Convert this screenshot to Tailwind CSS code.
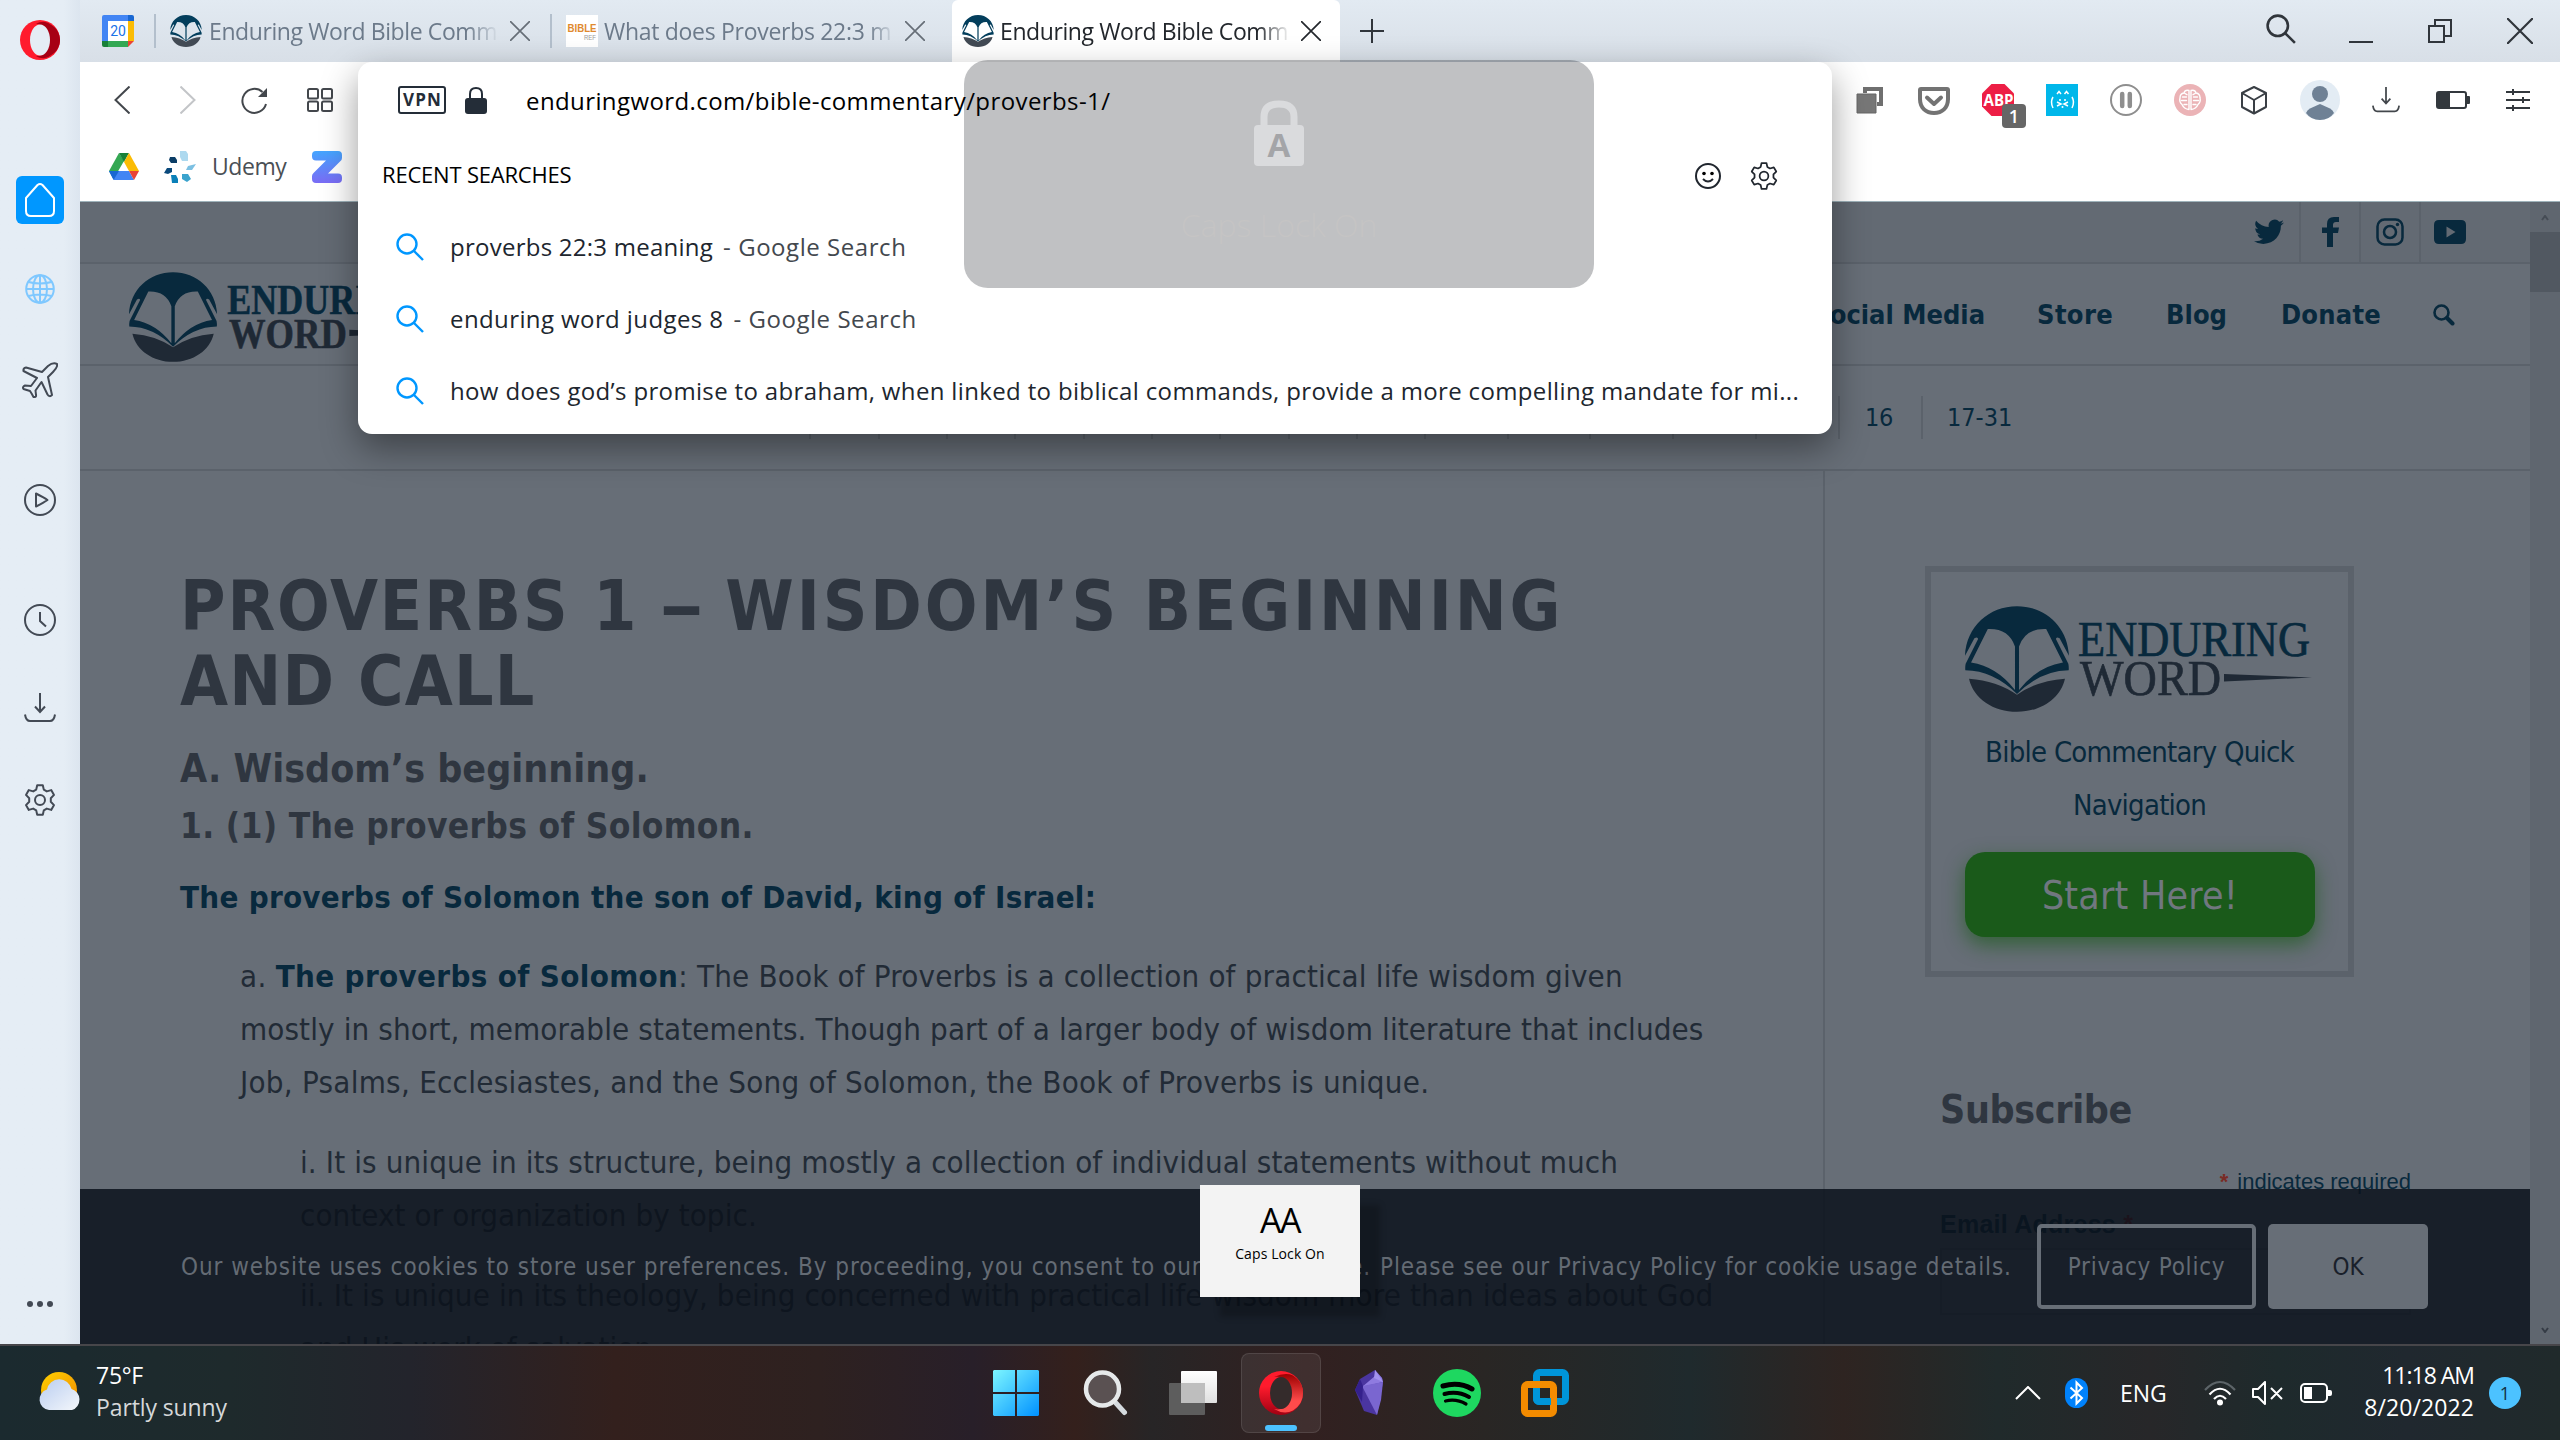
<!DOCTYPE html>
<html lang="en">
<head>
<meta charset="utf-8">
<title>Enduring Word Bible Commentary</title>
<script src="https://cdn.jsdelivr.net/npm/@tailwindcss/browser@4"></script>
</head>
<body class="relative h-[1440px] w-[2560px] overflow-hidden whitespace-nowrap font-['Open_Sans',sans-serif] text-[24px] text-[#20262e]">

<svg class="hidden">
  <symbol id="mark" viewBox="0 0 310 315">
    <path fill="var(--top)" fill-rule="evenodd" d="M0 148C4 60 72 0 155 0S306 60 310 148L282 96Q272 90 271 98L308 172Q310 182 309 191Q225 192 155 262Q85 192 1 191Q0 182 2 172L39 98Q38 90 28 96ZM68 68L18 168Q95 180 149 250L149 120Q130 65 68 68ZM242 68L292 168Q215 180 161 250L161 120Q180 65 242 68Z"/>
    <path fill="var(--bot)" d="M12 216Q95 222 155 264Q215 222 298 216C285 275 225 315 155 315S25 275 12 216Z"/>
  </symbol>
  <symbol id="gear" viewBox="0 0 32 32">
    <path fill="none" stroke="currentColor" stroke-width="2" stroke-linejoin="round" d="M13.2 1.2h5.6l1 4.4 3 1.8 4.4-1.3 2.8 4.8-3.2 3.3v3.6l3.2 3.3-2.8 4.8-4.4-1.3-3 1.8-1 4.4h-5.6l-1-4.4-3-1.8-4.4 1.3L2 21.100l3.200-3.300v-3.600L2 10.900l2.800-4.800 4.400 1.300 3-1.800z"/>
    <circle cx="16" cy="16" r="5" fill="none" stroke="currentColor" stroke-width="2"/>
  </symbol>
  <symbol id="x" viewBox="0 0 24 24"><path fill="none" stroke="currentColor" stroke-width="2" d="M0 0L24 24M24 0L0 24"/></symbol>
  <symbol id="glass" viewBox="0 0 28 28"><g fill="none" stroke="currentColor" stroke-width="2.400"><circle cx="11" cy="11" r="9.500"/><path d="M17.500 17.500L27 27"/></g></symbol>
  <symbol id="down" viewBox="0 0 32 32"><path fill="none" stroke="currentColor" stroke-width="2" d="M16 1v19M11 14.500l5 5.500 5-5.500M1 22.500q1 6.500 5 6.500h20q4 0 5-6.500"/></symbol>
</svg>

<div class="flex h-[1344px]">
  <!-- Opera sidebar -->
  <aside class="flex w-[80px] shrink-0 flex-col items-center bg-linear-to-r from-[#e5edf5] from-80% to-[#dce5ef] pt-5 text-[#434a55]">
    <svg class="size-[40px]" viewBox="0 0 40 40"><circle cx="20" cy="20" r="20" fill="#ff1b2d"/><path fill="#a70014" d="M16 4c5-1 10 4 11 16s-5 17-11 16c5 3 10 3 14.500-.5C37 32 40 26 40 20S37 8 30.500 4.500C26 1 21 1 16 4z"/><ellipse cx="20" cy="20" rx="10" ry="15.500" fill="#e5edf5"/></svg>
    <div class="mt-[116px] flex size-[48px] items-center justify-center rounded-[6px] bg-[#0097ff]"><svg class="size-[36px]" viewBox="0 0 36 36"><path fill="none" stroke="#fff" stroke-width="2" stroke-linejoin="round" d="M4 16L15.500 3q2.500-2 5 0L32 16v13q0 5-5 5H9q-5 0-5-5z"/></svg></div>
    <svg class="mt-[50px] size-[30px]" viewBox="0 0 30 30"><g fill="none" stroke="#7fc8ff" stroke-width="2"><circle cx="15" cy="15" r="13.800"/><ellipse cx="15" cy="15" rx="7" ry="13.800"/><path d="M15 1v28M1 15h28M3.500 8q11.500 3 23 0M3.500 22q11.500-3 23 0"/></g></svg>
    <svg class="mt-[58px] size-[36px]" viewBox="0 0 36 36"><path fill="none" stroke="currentColor" stroke-width="2" stroke-linejoin="round" d="M35 2Q31 0 26 4L20 10 4 5.500Q1 6 1.500 9L15 16l-6 8-6-.500Q0 25 1.500 27l6.500 2q2 3 3.500 6 3 .500 2.500-2l-.500-4.500 6-8.500 6 12.500q2 3 4.500.500L26 15l5-5Q36 5 35 2z"/></svg>
    <svg class="mt-[86px] size-[32px]" viewBox="0 0 32 32"><g fill="none" stroke="currentColor" stroke-width="2" stroke-linejoin="round"><circle cx="16" cy="16" r="15"/><path d="M12 9.500v13q8-4 11.500-6.500Q20 13.500 12 9.500z"/></g></svg>
    <svg class="mt-[88px] size-[32px]" viewBox="0 0 32 32"><g fill="none" stroke="currentColor" stroke-width="2"><circle cx="16" cy="16" r="15"/><path d="M16 8v9l6 5.500"/></g></svg>
    <svg class="mt-[56px] size-[32px]"><use href="#down"/></svg>
    <svg class="mt-[60px] size-[32px]"><use href="#gear"/></svg>
    <svg class="mt-[485px] h-[6px] w-[28px]" viewBox="0 0 28 6"><g fill="currentColor"><circle cx="4" cy="3" r="3"/><circle cx="14" cy="3" r="3"/><circle cx="24" cy="3" r="3"/></g></svg>
  </aside>

  <main class="flex w-[2480px] flex-col">
    <!-- Tab strip -->
    <div class="flex h-[62px] items-center bg-linear-to-b from-[#e2eaf2] to-[#d8dfe7] pl-[22px] text-[23px] leading-[34px] text-[#6c7a8a]">
      <svg class="size-8" viewBox="0 0 32 32"><path fill="#4285f4" d="M2 0h24v6H6v20H0V2q0-2 2-2z"/><path fill="#1967d2" d="M26 0h4q2 0 2 2v4h-6z"/><path fill="#fbbc04" d="M26 6h6v20h-6z"/><path fill="#188038" d="M0 26h6v6H2q-2 0-2-2z"/><path fill="#34a853" d="M6 26h20v6H6z"/><path fill="#ea4335" d="M26 26h6l-6 6z"/><path fill="#fff" d="M6 6h20v20H6z"/><text x="16" y="21" font-size="14" text-anchor="middle" fill="#1a73e8" font-family="Roboto">20</text></svg>
      <div class="ml-5 h-[34px] w-[2px] bg-[#b3bfcc]"></div>
      <svg class="ml-[14px] size-8 [--bot:#424a54] [--top:#033e5c]"><use href="#mark"/></svg>
      <div class="ml-[7px] w-[293px] overflow-hidden tracking-[-0.4px] [mask-image:linear-gradient(to_right,black_88%,transparent_99%)]">Enduring Word Bible Comm</div>
      <svg class="ml-[8px] size-5 text-[#666e77]"><use href="#x"/></svg>
      <div class="ml-5 h-[34px] w-[2px] bg-[#b3bfcc]"></div>
      <svg class="ml-[14px] size-8" viewBox="0 0 32 32"><path fill="#fff" d="M0 0h32v32H0z"/><text x="1.500" y="16.500" font-size="11" font-weight="700" fill="#e08a2e" font-family="Liberation Sans" textLength="29" lengthAdjust="spacingAndGlyphs">BIBLE</text><text x="18" y="25" font-size="7.500" fill="#9a9a9a" font-family="Liberation Sans" textLength="12" lengthAdjust="spacingAndGlyphs">REF</text></svg>
      <div class="ml-[6px] w-[294px] overflow-hidden tracking-[-0.3px] [mask-image:linear-gradient(to_right,black_90%,transparent_99%)]">What does Proverbs 22:3 m</div>
      <svg class="ml-[7px] size-5 text-[#666e77]"><use href="#x"/></svg>
      <div class="ml-[27px] flex h-full w-[388px] items-center rounded-t-[6px] bg-white pl-[10px] text-[#23272c]">
        <svg class="size-8 [--bot:#424a54] [--top:#033e5c]"><use href="#mark"/></svg>
        <div class="ml-[6px] w-[293px] overflow-hidden tracking-[-0.4px] [mask-image:linear-gradient(to_right,black_88%,transparent_99%)]">Enduring Word Bible Comm</div>
        <svg class="ml-[8px] size-5"><use href="#x"/></svg>
      </div>
      <svg class="ml-5 size-6 text-[#30353b]" viewBox="0 0 24 24"><path stroke="currentColor" stroke-width="2" d="M12 0v24M0 12h24"/></svg>
      <div class="ml-auto flex items-center text-[#30353b]">
        <svg class="-mt-1 size-[30px]"><use href="#glass"/></svg>
        <svg class="ml-[53px] size-6" viewBox="0 0 24 24"><path stroke="currentColor" stroke-width="2" d="M0 23h24"/></svg>
        <svg class="ml-[55px] size-6" viewBox="0 0 24 24"><path fill="none" stroke="currentColor" stroke-width="2" d="M1 7h15v16H1zM7 7V1h16v16h-7"/></svg>
        <svg class="ml-[55px] mr-[27px] size-[26px]"><use href="#x"/></svg>
      </div>
    </div>

    <!-- Toolbar and bookmarks -->
    <div class="h-[140px] border-b border-[#9fb3bb] bg-white">
      <div class="flex h-[76px] items-center text-[#43474c]">
        <svg class="ml-[34px] h-7 w-4" viewBox="0 0 16 28"><path fill="none" stroke="currentColor" stroke-width="2" d="M15.500.500L1.500 14l14 13.500"/></svg>
        <svg class="ml-[50px] h-7 w-4 text-[#c3c5c8]" viewBox="0 0 16 28"><path fill="none" stroke="currentColor" stroke-width="2" d="M.500.500L14.500 14l-14 13.500"/></svg>
        <svg class="ml-[44px] size-7" viewBox="0 0 28 28"><path fill="none" stroke="currentColor" stroke-width="2" d="M22.500 6A12 12 0 1 0 26 18"/><path fill="currentColor" d="M27 2v9h-9z"/></svg>
        <svg class="ml-[39px] size-[26px]" viewBox="0 0 26 26"><g fill="none" stroke="currentColor" stroke-width="2"><rect x="1" y="2" width="10" height="9.500" rx="1.500"/><rect x="15" y="2" width="10" height="9.500" rx="1.500"/><rect x="1" y="14.500" width="10" height="9.500" rx="1.500"/><rect x="15" y="14.500" width="10" height="9.500" rx="1.500"/></g></svg>
        <div class="ml-auto flex items-center pr-[25px]">
          <svg class="size-8" viewBox="0 0 32 32"><path fill="none" stroke="#6f6f6f" stroke-width="4" d="M11 9V5h16v15h-4"/><path fill="#777" stroke="#666" d="M3 10h19v19H3z"/></svg>
          <svg class="ml-8 size-8" viewBox="0 0 32 32"><path fill="#737373" d="M3 3h26q3 0 3 3v9c0 10-7 16-16 16S0 25 0 15V6q0-3 3-3z"/><path fill="#fff" d="M4 7h24v8c0 8-5 12-12 12S4 23 4 15z"/><path fill="none" stroke="#737373" stroke-width="4" stroke-linecap="round" stroke-linejoin="round" d="M9 13.500l7 6.500 7-6.500"/></svg>
          <div class="relative ml-8 size-8">
            <svg class="size-8" viewBox="0 0 32 32"><path fill="#ed1e45" d="M9.500 0h13L32 9.500v13L22.500 32h-13L0 22.500v-13z"/><text x="1.500" y="21.500" font-size="15.500" font-weight="700" fill="#fff" font-family="Open Sans" textLength="30" lengthAdjust="spacingAndGlyphs">ABP</text></svg>
            <div class="absolute left-[20px] top-[20px] flex size-6 items-center justify-center rounded-[4px] bg-[#666] text-[18px] font-semibold text-white">1</div>
          </div>
          <svg class="ml-8 size-8" viewBox="0 0 32 32"><path fill="#00b7ea" d="M0 0h32v32H0z"/><g fill="none" stroke="#fff" stroke-width="1.500"><path d="M11 10l2-2.500 2 2.500M18.500 10l2-2.500 2 2.500M7 13q-3 5 0 11M26 13q3 5 0 11M11 18l4 2-4 2M22 18l-4 2 4 2"/></g><g fill="#fff"><circle cx="14" cy="16" r="1"/><circle cx="19" cy="16" r="1"/><circle cx="16.500" cy="23" r="1"/></g></svg>
          <svg class="ml-8 size-8" viewBox="0 0 32 32"><circle cx="16" cy="16" r="15" fill="none" stroke="#8e8e8e" stroke-width="2"/><path stroke="#8e8e8e" stroke-width="4.500" stroke-linecap="round" d="M12.200 10v12M19.800 10v12"/></svg>
          <svg class="ml-8 size-8" viewBox="0 0 32 32"><circle cx="16" cy="16" r="16" fill="#ebb3b6"/><g fill="none" stroke="#fff" stroke-width="1.400" stroke-linecap="round"><path d="M15 7v18M17 7v18M15 6.500q-4-1-5 2.500-4 .5-4 5-1 4 2 6.500 2 4.500 7 5M17 6.500q4-1 5 2.500 4 .5 4 5 1 4-2 6.500-2 4.500-7 5M8.500 13h4M7.500 16.500h5M10 20.500h3M19.500 13h4M19.500 16.500h5M19 20.500h3M11 9.500l2 1.200M21 9.500l-2 1.200"/></g></svg>
          <svg class="ml-8 size-8" viewBox="0 0 32 32"><path fill="none" stroke="#3a3f45" stroke-width="2" stroke-linejoin="round" d="M16 3L28 9v14l-12 6.500L4 23V9zM4 9l12 7 12-7M16 16v13"/></svg>
          <svg class="ml-[30px] size-10" viewBox="0 0 40 40"><circle cx="20" cy="20" r="20" fill="#e3ecf4"/><circle cx="20" cy="14" r="8" fill="#6f8195"/><path fill="#6f8195" d="M6 33q1-3 4-4.500L20 24l10 4.500q3 1.500 4 4.500-5 7-14 7T6 33z"/></svg>
          <svg class="ml-[32px] size-[28px]"><use href="#down"/></svg>
          <svg class="ml-[36px] h-[18px] w-[34px]" viewBox="0 0 34 18"><rect x="1" y="1" width="29" height="16" rx="2" fill="none" stroke="#33383d" stroke-width="2"/><path fill="#33383d" d="M2 2h12v14H2zM31 5h2q1 0 1 1v6q0 1-1 1h-2z"/></svg>
          <svg class="ml-[36px] mr-[5px] size-[24px]" viewBox="0 0 24 24"><path stroke="#33383d" stroke-width="2" d="M0 4h24M0 12h24M0 20h24M7 1v6M17 9v6M7 17v6"/></svg>
        </div>
      </div>
      <div class="flex h-[55px] items-center text-[23px] text-[#4a4f55]">
        <svg class="ml-[29px] mt-[2px] h-[27px] w-[30px]" viewBox="0 0 30 27"><path fill="#34a853" d="M10 0L0 18l4.500 8L15 8z"/><path fill="#188038" d="M10 0h10l-5 9z"/><path fill="#fbbc04" d="M20 0l10 18H20L15 9z"/><path fill="#4285f4" d="M0 18h20l5 9H5z"/><path fill="#1967d2" d="M0 18h10l-5.500 9z"/><path fill="#ea4335" d="M20 18h10l-5 9z"/></svg>
        <svg class="ml-[25px] mt-[2px] size-8" viewBox="0 0 32 32"><path fill="#add9ef" d="M16 0h6l2 3v7h-6l-2-4z"/><path fill="#7cc0e2" d="M32 13l-8 2-2 4h6z"/><path fill="#0b3d66" d="M6 6h5l2 3v3H7L5 9z"/><path fill="#0b4a7c" d="M3 17h5v4l-4 2-4-1z"/><path fill="#0a80b8" d="M7 24h5l2 4v4H8z"/><path fill="#3ba3cd" d="M18 23h6l3 5-4 3-5-3z"/></svg>
        <span class="ml-[16px] mt-px tracking-[-0.45px]">Udemy</span>
        <svg class="ml-[26px] mt-[2px] h-8 w-[30px]" viewBox="0 0 30 32"><defs><linearGradient id="zg" x2="0" y2="1"><stop stop-color="#45a5ff"/><stop offset="1" stop-color="#7a6cf5"/></linearGradient></defs><path fill="url(#zg)" d="M4 0h22q4 0 4 4v3q0 2-2 3.500L16 22.500h10q4 0 4 4v1.500q0 4-4 4H4q-4 0-4-4v-3q0-2 2-3.500L14 9.500H4q-4 0-4-4V4q0-4 4-4z"/></svg>
      </div>
    </div>

    <!-- Page viewport -->
    <div class="relative flex h-[1142px] overflow-hidden bg-[#676e77] font-['DejaVu_Sans_Condensed','DejaVu_Sans',sans-serif] text-[#08293d]">
      <div class="w-[2450px]">
        <div class="flex h-[62px] justify-end border-b-2 border-[#5b626b] bg-[#636a73] pr-[51px]">
          <div class="flex w-[62px] items-center justify-center"><svg class="ml-[2px] h-[26px] w-[30px]" viewBox="0 0 24 20"><path fill="currentColor" d="M24 2.400a10 10 0 0 1-2.800.8A5 5 0 0 0 23.300.500a10 10 0 0 1-3.100 1.200A4.900 4.900 0 0 0 11.800 6 14 14 0 0 1 1.700.900a4.900 4.900 0 0 0 1.500 6.600A5 5 0 0 1 1 6.900a4.900 4.900 0 0 0 3.900 4.900 5 5 0 0 1-2.200.1 4.900 4.900 0 0 0 4.600 3.400A9.900 9.900 0 0 1 0 17.300 14 14 0 0 0 7.500 19.500c9.200 0 14.300-7.700 14-14.600A10 10 0 0 0 24 2.400z"/></svg></div>
          <div class="flex w-[60px] items-center justify-center border-l-2 border-[#5b626b]"><svg class="h-[30px] w-[17px]" viewBox="0 0 17 30"><path fill="currentColor" d="M5 30V16H0v-5.500h5V7q0-7 7-7h5v5h-3q-3 0-3 3v2.500h6L16 16h-5v14z"/></svg></div>
          <div class="flex w-[60px] items-center justify-center border-l-2 border-[#5b626b]"><svg class="size-[28px]" viewBox="0 0 28 28"><g fill="none" stroke="currentColor" stroke-width="2.500"><rect x="1.500" y="1.500" width="25" height="25" rx="7"/><circle cx="14" cy="14" r="6"/></g><circle cx="21.500" cy="6.500" r="1.700" fill="currentColor"/></svg></div>
          <div class="flex w-[60px] items-center justify-center border-l-2 border-[#5b626b]"><svg class="h-[24px] w-[32px]" viewBox="0 0 32 24"><path fill="currentColor" fill-rule="evenodd" d="M5 0h22q5 0 5 5v14q0 5-5 5H5q-5 0-5-5V5q0-5 5-5zM12.500 6.500v11l9-5.500z"/></svg></div>
        </div>
        <div class="flex h-[102px] items-center border-b-2 border-[#5b626b] text-[27px] font-bold leading-[40px]">
          <svg class="ml-[49px] mt-[6px] h-[90px] w-[300px] [--bot:#1f2935] [--top:#08293d]" viewBox="0 0 354 106"><use href="#mark" width="104" height="106"/><g font-family="Liberation Serif" font-size="50" stroke-width=".7"><text x="116" y="50" fill="#08293d" stroke="#08293d" textLength="231" lengthAdjust="spacingAndGlyphs">ENDURING</text><text x="118" y="89" fill="#1f2935" stroke="#1f2935" textLength="139" lengthAdjust="spacingAndGlyphs">WORD</text></g><path fill="#1f2935" d="M260 68l88 3.500-88 4z"/></svg>
          <div class="ml-auto flex items-center pt-[2px]"><span>Social Media</span><span class="ml-[52px] tracking-[0.35px]">Store</span><span class="ml-[53px]">Blog</span><span class="ml-[54px] tracking-[0.23px]">Donate</span>
          <svg class="ml-[52px] mr-[75px] size-[22px]" viewBox="0 0 22 22"><g fill="none" stroke="currentColor"><circle cx="8.500" cy="8.500" r="7" stroke-width="2.600"/><path stroke-width="4" stroke-linecap="round" d="M14 14l5.500 5.500"/></g></svg></div>
        </div>
        <div class="flex h-[105px] items-center justify-end border-b-2 border-[#5b626b] text-[25px]">
          <div class="flex h-[43px]">
            <div class="w-[69px] border-l-2 border-[#5b626b]"></div><div class="w-[68px] border-l-2 border-[#5b626b]"></div><div class="w-[68px] border-l-2 border-[#5b626b]"></div><div class="w-[69px] border-l-2 border-[#5b626b]"></div><div class="w-[68px] border-l-2 border-[#5b626b]"></div><div class="w-[68px] border-l-2 border-[#5b626b]"></div><div class="w-[69px] border-l-2 border-[#5b626b]"></div><div class="w-[68px] border-l-2 border-[#5b626b]"></div><div class="w-[68px] border-l-2 border-[#5b626b]"></div><div class="w-[83px] border-l-2 border-[#5b626b]"></div><div class="w-[82px] border-l-2 border-[#5b626b]"></div><div class="w-[83px] border-l-2 border-[#5b626b]"></div><div class="w-[83px] border-l-2 border-[#5b626b]"></div><div class="w-[83px] border-l-2 border-[#5b626b]"></div>
            <div class="flex w-[83px] items-center border-l-2 border-[#5b626b] pl-[25px] pt-px tracking-[-0.3px]">16</div>
            <div class="flex w-[609px] items-center border-l-2 border-[#5b626b] pl-[24px] pt-px">17-31</div>
          </div>
        </div>

        <div class="flex h-[900px]">
          <article class="w-[1745px] shrink-0 border-r-2 border-[#5b626b] pl-[100px] pt-[98px] text-[31px] leading-[53px] text-[#222b36]">
            <h1 class="text-[69px] font-bold leading-[75px] text-[#2f3640]"><span class="tracking-[1.9px]">PROVERBS 1 </span><span class="mx-[4px] inline-block scale-x-[1.45]">–</span><span class="tracking-[2.9px]"> WISDOM’S BEGINNING</span><br><span class="tracking-[1.2px]">AND CALL</span></h1>
            <h2 class="mt-[20px] text-[39px] font-bold leading-[59px] text-[#2f3640]">A. Wisdom’s beginning.</h2>
            <h3 class="text-[35px] font-bold leading-[56px] tracking-[0.32px] text-[#2f3640]">1. (1) The proverbs of Solomon.</h3>
            <p class="mt-[17px] font-bold leading-[52px] tracking-[0.28px] text-[#08293d]">The proverbs of Solomon the son of David, king of Israel:</p>
            <p class="ml-[60px] mt-[27px]"><span class="tracking-[0.3px]">a. </span><b class="tracking-[0.35px] text-[#08293d]">The proverbs of Solomon</b><span class="tracking-[0.18px]">: The Book of Proverbs is a collection of practical life wisdom given</span><br><span class="tracking-[0.12px]">mostly in short, memorable statements. Though part of a larger body of wisdom literature that includes</span><br><span class="tracking-[0.26px]">Job, Psalms, Ecclesiastes, and the Song of Solomon, the Book of Proverbs is unique.</span></p>
            <p class="ml-[120px] mt-[27px]"><span class="tracking-[0.12px]">i. It is unique in its structure, being mostly a collection of individual statements without much</span><br><span class="tracking-[0.08px]">context or organization by topic.</span></p>
            <p class="ml-[120px] mt-[27px]"><span class="tracking-[0.12px]">ii. It is unique in its theology, being concerned with practical life wisdom more than ideas about God</span><br><span>and His work of salvation.</span></p>
          </article>
          <aside class="pl-[100px] pt-[95px]">
            <div class="h-[411px] w-[429px] border-[6px] border-[#5b626b] px-[34px] pt-[34px] text-[29px] leading-[53px]">
              <svg class="h-[106px] w-[354px] [--bot:#1f2935] [--top:#08293d]" viewBox="0 0 354 106"><use href="#mark" width="104" height="106"/><g font-family="Liberation Serif" font-size="50" stroke-width=".7"><text x="113" y="50" fill="#08293d" stroke="#08293d" textLength="232" lengthAdjust="spacingAndGlyphs">ENDURING</text><text x="115" y="89" fill="#1f2935" stroke="#1f2935" textLength="141" lengthAdjust="spacingAndGlyphs">WORD</text></g><path fill="#1f2935" d="M259 68l88 3.500-88 4z"/></svg>
              <div class="mt-[14px] text-center tracking-[-0.75px]">Bible Commentary Quick<br>Navigation</div>
              <div class="mt-5 h-[85px] w-[350px] rounded-[20px] bg-[#1a5a1a] text-center text-[39px] leading-[88px] tracking-[0.2px] text-[#70777f] shadow-[0_8px_20px_#1a5a1aaa]">Start Here!</div>
            </div>
            <div class="ml-[15px] mt-[108px] w-[471px] font-['Liberation_Sans',sans-serif]">
              <h2 class="font-['DejaVu_Sans_Condensed','DejaVu_Sans',sans-serif] text-[39px] font-bold leading-[50px] tracking-[-0.37px] text-[#2f3640]">Subscribe</h2>
              <div class="mt-[34px] text-right text-[22px] leading-[26px]"><span class="mr-[3px] font-bold text-[#7a2b25]">*</span> indicates required</div>
              <div class="mt-[14px] text-[25px] font-bold leading-[30px] tracking-[0.25px]">Email Address <span class="text-[#7a1f25]">*</span></div>
              <div class="mt-[9px] h-[67px] border-2 border-[#5b626b]"></div>
            </div>
          </aside>
        </div>
      </div>
      <!-- Scrollbar -->
      <div class="flex w-[30px] flex-col items-center bg-[#5f666f] text-[#353c46]">
        <svg class="mt-[13px] h-[6px] w-[8px]" viewBox="0 0 8 6"><path fill="none" stroke="#454c55" stroke-width="2" d="M1 5l3-4 3 4"/></svg>
        <div class="mt-[11px] h-[60px] w-full bg-[#515861]"></div>
        <svg class="mb-[11px] mt-auto h-[6px] w-[8px]" viewBox="0 0 8 6"><path fill="none" stroke="#353c46" stroke-width="2" d="M1 1l3 4 3-4"/></svg>
      </div>
      <!-- Cookie notice -->
      <div class="absolute bottom-0 left-0 flex h-[155px] w-[2450px] items-center bg-[#0b121b]/85 pl-[101px] text-[24px] leading-[34px] text-[#646b74]">
        <span class="w-[1019px] tracking-[0.96px]">Our website uses cookies to store user preferences. By proceeding, you consent to our</span>
        <span class="w-[171px] text-right tracking-[0.9px]">cookie usage.</span>
        <span class="ml-[9px] w-[631px] tracking-[0.9px]">Please see our Privacy Policy for cookie usage details.</span>
        <div class="ml-[26px] flex h-[85px] w-[219px] items-center justify-center rounded-[5px] border-4 border-[#676e77] tracking-[0.76px]">Privacy Policy</div>
        <div class="ml-[12px] flex h-[85px] w-[160px] items-center justify-center rounded-[5px] bg-[#676e77] text-[#19202a]">OK</div>
      </div>
    </div>
  </main>
</div>

<!-- Address dropdown -->
<div class="absolute left-[358px] top-[62px] h-[372px] w-[1474px] rounded-[14px] bg-white shadow-[0_14px_36px_rgba(0,0,0,0.4)]">
  <div class="flex h-[76px] items-center pl-[40px] text-black">
    <div class="flex h-[28px] w-[48px] items-center justify-center rounded-[3px] border-2 border-[#242d38] pl-px text-[17px] font-bold tracking-[1.15px] text-[#242d38]">VPN</div>
    <svg class="ml-[19px] h-[27px] w-[22px]" viewBox="0 0 22 27"><rect y="11" width="22" height="16" rx="3" fill="#242d38"/><path fill="none" stroke="#242d38" stroke-width="2" d="M5 11V7q0-6 6-6t6 6v4"/></svg>
    <span class="ml-[39px] mt-px tracking-[0.4px]">enduringword.com/bible-commentary/proverbs-1/</span>
  </div>
  <div class="flex h-[76px] items-center pl-[24px] text-[22px] font-medium text-black">
    <span class="-mt-[3px] tracking-[-0.2px]">RECENT SEARCHES</span>
    <svg class="ml-auto size-[26px]" viewBox="0 0 26 26"><circle cx="13" cy="13" r="12" fill="none" stroke="#20262e" stroke-width="2"/><circle cx="9" cy="10.500" r="1.800"/><circle cx="17" cy="10.500" r="1.800"/><path fill="none" stroke="#20262e" stroke-width="2" d="M8 16q5 5 10 0"/></svg>
    <svg class="ml-[29px] mr-[54px] size-[28px] text-[#20262e]"><use href="#gear"/></svg>
  </div>
  <div class="flex h-[68px] items-center pl-[38px]"><svg class="-mt-[2px] size-[28px] shrink-0 text-[#0097ff]"><use href="#glass"/></svg><span class="-mt-[2px] ml-[26px] tracking-[0.25px]">proverbs 22:3 meaning</span><span class="-mt-[2px] ml-[10px] tracking-[0.55px] text-[#43484e]">- Google Search</span></div>
  <div class="mt-1 flex h-[68px] items-center pl-[38px]"><svg class="-mt-[3px] size-[28px] shrink-0 text-[#0097ff]"><use href="#glass"/></svg><span class="-mt-[2px] ml-[26px] tracking-[0.4px]">enduring word judges 8</span><span class="-mt-[2px] ml-[10px] tracking-[0.55px] text-[#43484e]">- Google Search</span></div>
  <div class="mt-1 flex h-[68px] items-center pl-[38px]"><svg class="-mt-[3px] size-[28px] shrink-0 text-[#0097ff]"><use href="#glass"/></svg><span class="-mt-[3px] ml-[26px] tracking-[0.35px]">how does god’s promise to abraham, when linked to biblical commands, provide a more compelling mandate for mi...</span></div>
</div>

<!-- Keyboard on-screen display -->
<div class="absolute left-[964px] top-[60px] flex h-[228px] w-[630px] flex-col items-center rounded-[24px] bg-[#05080f]/25">
  <svg class="mt-[40px] h-[66px] w-[50px]" viewBox="0 0 50 66"><rect y="25" width="50" height="41" rx="4" fill="#dadbdd"/><path fill="none" stroke="#dadbdd" stroke-width="7" d="M10 26V17q0-13 15-13t15 13v9"/><text x="25" y="57" text-anchor="middle" font-family="Open Sans" font-weight="700" font-size="33" fill="#a4a5a8">A</text></svg>
  <div class="mt-[37px] text-[32px] font-light leading-[44px] text-[#c5c4c4]">Caps Lock On</div>
</div>

<!-- Caps lock popup -->
<div class="absolute left-[1200px] top-[1185px] flex h-[112px] w-[160px] flex-col items-center bg-[#f3f3f3] pt-[12px] text-black shadow-[20px_20px_6px_rgba(0,0,0,0.22)]">
  <div class="text-[34px] leading-[46px] tracking-[-1.5px]">AA</div>
  <div class="mt-px text-[14px] leading-[20px] tracking-[0.1px]">Caps Lock On</div>
</div>

<!-- Windows taskbar -->
<footer class="flex h-[96px] items-center border-t-2 border-[#47464a] bg-[linear-gradient(90deg,#1b2a2f_0%,#1e2a2c_9%,#23242c_16%,#33201d_24%,#2e2120_32%,#281f29_38%,#34201c_42%,#272526_45%,#322020_51%,#292624_58%,#1f2a2d_66%,#2e2421_72%,#202a2b_78%,#272729_84%,#1e2a2c_89%,#20282f_94%,#202a2b_100%)] text-[23px] text-white">
  <svg class="-mt-[5px] ml-[38px] h-[38px] w-[46px]" viewBox="0 0 46 38"><defs><linearGradient id="sun" x2="1" y2="1"><stop stop-color="#ffd000"/><stop offset="1" stop-color="#f08a00"/></linearGradient><linearGradient id="cl" x2="1" y2="1"><stop stop-color="#b9cdf0"/><stop offset="1" stop-color="#f4f7fb"/></linearGradient></defs><circle cx="21" cy="18" r="18" fill="url(#sun)"/><path fill="url(#cl)" d="M11 38a10.500 10.500 0 0 1-2-20.500A12.500 12.500 0 0 1 33.500 17 11 11 0 0 1 34 38z"/></svg>
  <div class="-mt-[5px] ml-[12px] w-[135px] leading-[32px]"><div class="tracking-[-0.26px]">75°F</div><div class="tracking-[-0.12px] text-[#d5d8da]">Partly sunny</div></div>

  <div class="ml-[762px] flex items-center">
    <svg class="size-[46px]" viewBox="0 0 46 46"><defs><linearGradient id="wg" gradientUnits="userSpaceOnUse" x2="46" y2="46"><stop stop-color="#7df6ff"/><stop offset="1" stop-color="#0091ff"/></linearGradient></defs><path fill="url(#wg)" d="M1 0h21v22H0V1zM24 0h21l1 1v21H24zM0 24h22v22H1l-1-1zM24 24h22v21l-1 1H24z"/></svg>
    <svg class="ml-[44px] size-[46px]" viewBox="0 0 46 46"><path stroke="#d5dade" stroke-width="5" stroke-linecap="round" d="M32 32l9.500 10.500"/><circle cx="19.500" cy="19" r="16.500" fill="#5a5152" stroke="#e6e9ea" stroke-width="4.500"/></svg>
    <svg class="ml-[40px] h-[46px] w-[48px]" viewBox="0 0 48 46"><defs><linearGradient id="tv" x2="0" y2="1"><stop stop-color="#fff"/><stop offset="1" stop-color="#e0e0e0"/></linearGradient></defs><rect x="12" y="1" width="36" height="32" rx="1" fill="url(#tv)"/><rect y="13" width="36" height="32" rx="1" fill="#5d5d5d"/><path fill="#bebebe" d="M12 13h24v20H12z"/></svg>
    <div class="relative ml-[24px] flex size-[80px] items-center justify-center rounded-[8px] border border-white/10 bg-white/[0.07]">
      <svg class="size-[44px]" viewBox="0 0 44 44"><defs><linearGradient id="o1" x2="0" y2="1"><stop stop-color="#ff1b2d"/><stop offset=".35" stop-color="#ff1b2d"/><stop offset="1" stop-color="#a00012"/></linearGradient><linearGradient id="o2" x2="0" y2="1"><stop stop-color="#9c0000"/><stop offset=".7" stop-color="#ff4b4b"/></linearGradient></defs><circle cx="22" cy="22" r="22" fill="url(#o1)"/><path fill="url(#o2)" d="M15 6Q26 1 34 4.500Q44 11 44 22t-10 17.500Q25 44 15 38q9 2 14-5 4-5 4-11t-4-11q-5-6-14-5z"/><ellipse cx="22" cy="22" rx="11" ry="16" fill="#342b2b"/></svg>
      <div class="absolute bottom-[1px] left-[23px] h-[6px] w-8 rounded-full bg-[#4cc2ff]"></div>
    </div>
    <svg class="ml-[34px] h-[46px] w-[28px]" viewBox="0 0 28 46"><path fill="#4a35a0" d="M20 0L5 9 0 20l9 21 13 4 6-33-1-4z"/><path fill="#8f7be0" d="M20 0l7 8 1 4L7 17 20 6z"/><path fill="#7a66d0" d="M7 16l21-4-2 18-4 15z"/><path fill="#34208c" d="M5 9l3 7L7 32 0 20z"/><path fill="#a393f0" d="M20 0l8 12-9-4z"/></svg>
    <svg class="ml-[50px] size-[48px]" viewBox="0 0 48 48"><circle cx="24" cy="24" r="24" fill="#1ed760"/><g fill="none" stroke="#000" stroke-linecap="round"><path stroke-width="5" d="M10 17q16-4.500 29 3"/><path stroke-width="4" d="M11.500 25q13-3.500 24.500 3"/><path stroke-width="3.200" d="M12.500 32q11-2.500 20.500 3"/></g></svg>
    <svg class="ml-[40px] size-[48px]" viewBox="0 0 48 48"><g fill="none" stroke-width="7"><rect x="15.500" y="3.500" width="29" height="29" rx="3" stroke="#0095d9"/><rect x="3.500" y="15.500" width="29" height="29" rx="3" stroke="#f38b00"/><path stroke="#0095d9" d="M15.500 20v9.500q0 3 3 3H30"/></g></svg>
  </div>

  <div class="ml-auto flex items-center">
    <svg class="h-[14px] w-[26px]" viewBox="0 0 26 14"><path fill="none" stroke="#fff" stroke-width="2" d="M1 13L13 1l12 12"/></svg>
    <svg class="ml-[24px] h-[30px] w-[23px]" viewBox="0 0 23 30"><rect width="23" height="30" rx="11.500" fill="#0082fc"/><path fill="none" stroke="#fff" stroke-width="2" d="M5.500 9.500L17 20l-5.500 5.500v-21L17 10 5.500 20.500"/></svg>
    <span class="ml-[32px] mt-px w-[47px]">ENG</span>
    <svg class="-mt-px ml-[37px] h-[26px] w-[32px]" viewBox="0 0 32 26"><g fill="none" stroke="#fff" stroke-width="2.200"><path stroke="#5c6468" d="M1 10q15-16 30 0"/><path d="M5.500 14.500q10.500-11.500 21 0M10 19q6-6.500 12 0"/></g><circle cx="16" cy="22.500" r="3" fill="#fff"/></svg>
    <svg class="ml-[16px] h-[24px] w-[31px]" viewBox="0 0 31 24"><path fill="none" stroke="#fff" stroke-width="2" stroke-linejoin="round" d="M1 8h5l7-7v22l-7-7H1zM19 7l11 11M30 7L19 18"/></svg>
    <svg class="ml-[17px] h-[20px] w-[32px]" viewBox="0 0 32 20"><rect x="1" y="1" width="26" height="18" rx="4" fill="none" stroke="#fff" stroke-width="2"/><path fill="#fff" d="M4 4h8v12H4zM28 7h2q2 0 2 2v2q0 2-2 2h-2z"/></svg>
    <div class="-mt-[5px] ml-[32px] w-[110px] text-right leading-[32px]"><div class="tracking-[-1px]">11:18 AM</div><div class="tracking-[0.1px]">8/20/2022</div></div>
    <div class="ml-[15px] mr-[39px] flex size-[32px] items-center justify-center rounded-full bg-[#4cc2ff] text-[18px] text-[#12303f]">1</div>
  </div>
</footer>
</body>
</html>
